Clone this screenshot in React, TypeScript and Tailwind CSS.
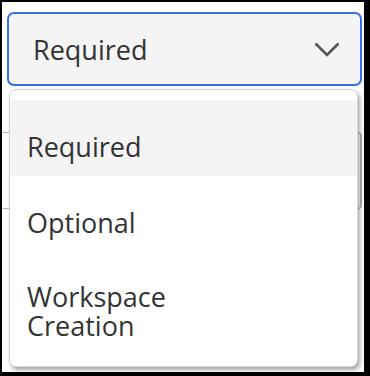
const options = ["Required", "Optional", "Workspace Creation"];

const Chevron = () => (
  <svg width="26" height="15" viewBox="0 0 26 15" fill="none">
    <path d="M1.5 1.5 L13 13 L24.5 1.5" stroke="#555555" strokeWidth="2.6" />
  </svg>
);

export default function App() {
  const selected = "Required";
  return (
    <div
      className="flex h-[376px] w-[370px] bg-black pb-[4px] pl-[2px] pr-[6px] pt-[2px]"
      style={{ fontFamily: '"Open Sans", "Noto Sans", sans-serif' }}
    >
      <div className="relative flex flex-1 flex-col overflow-hidden bg-white">
        <button className="ml-[5px] mt-[10px] flex h-[74px] w-[355px] shrink-0 items-center justify-between rounded-[7px] border-2 border-[#3b6ee6] bg-[#f4f4f4] pl-[24px] pr-[20px] text-left">
          <span className="text-[27px] leading-[29px] text-[#333333]">{selected}</span>
          <Chevron />
        </button>

        {/* field underneath, mostly hidden by the open menu */}
        <div className="ml-[-4px] mt-[46px] h-[77px] w-[364px] shrink-0 rounded-[4px] border-y border-r-2 border-[#b4b4b4]" />

        <div className="absolute left-[7px] top-[87px] h-[278px] w-[349px] overflow-hidden rounded-[7px] border border-[#d4d4d4] bg-white pt-[10px] shadow-[2px_3px_4px_rgba(0,0,0,0.35)]">
          {options.map((o, i) => (
            <div
              key={o}
              className={`w-full pl-[17px] text-[27px] leading-[29px] text-[#333333] ${
                o === selected ? "bg-[#f4f4f4]" : ""
              } ${i < 2 ? "h-[76px] pt-[32px]" : "pt-[30px]"}`}
            >
              {i === 2 ? (
                <>
                  Workspace
                  <br />
                  Creation
                </>
              ) : (
                o
              )}
            </div>
          ))}
        </div>
      </div>
    </div>
  );
}
